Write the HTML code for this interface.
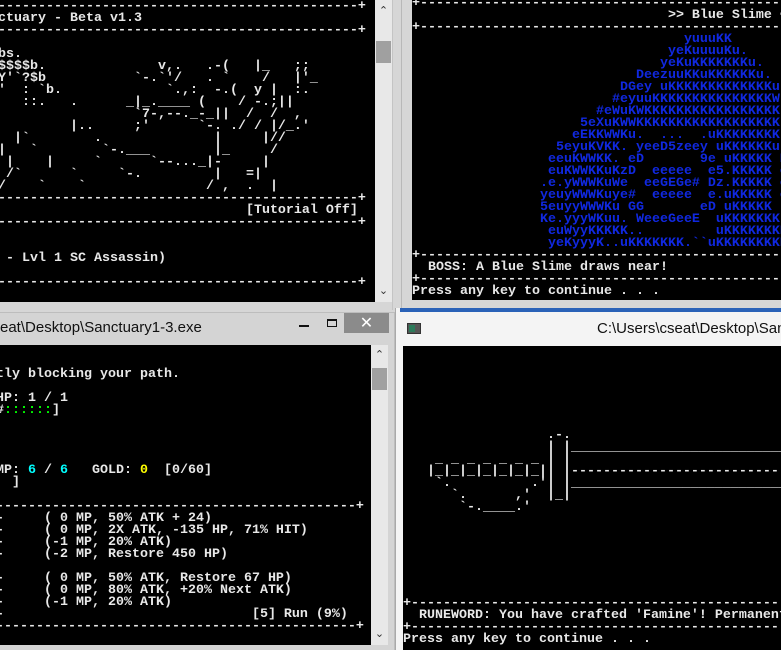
<!DOCTYPE html>
<html><head><meta charset="utf-8"><style>
*{margin:0;padding:0;box-sizing:border-box}
body{width:781px;height:650px;overflow:hidden;background:#d6d6d6;position:relative;font-family:"Liberation Sans",sans-serif}
.abs{position:absolute}
.con{position:absolute;background:#000;overflow:hidden}
pre{position:absolute;font-family:"Liberation Mono",monospace;font-weight:bold;font-size:13.33px;line-height:12px;color:#c0c0c0;white-space:pre;margin:0}
.w{color:#e8e8e8}
.b{color:#1028e0}
.g{color:#00ff00}
.c{color:#00ffff}
.y{color:#ffff00}
.sb{position:absolute;background:#e8e8e8}
.arr{position:absolute;width:17px;text-align:center;font-size:11px;color:#333;font-family:"DejaVu Sans",sans-serif}
.thumb{position:absolute;background:#a0a0a0;width:15px;left:1px}
</style></head><body>

<!-- top-left console -->
<div class="con" style="left:0;top:0;width:375px;height:302px">
<pre class="w" style="left:-2px;top:1px">---------------------------------------------+
ctuary - Beta v1.3
---------------------------------------------+

bs.
$$$$b.              v,.   .-(   |_   ;;
Y'`?$b           `-.`'/   . `    /   |'_
'  : `b.             `.,:  -.(  y |  :.
   ::.   .      _|_.____ (    / -.;||
                 `7-,--._-_||  /  /  ,
         |..     ;'      `-. ./ / |/_.'
  |`        .              |     |//
|   `        `-.___        |_     /
 |    |     `      `--..._|-     |
 /`      `     `-.         |   =|
/    `    `               / ,  .  |
---------------------------------------------+
                               [Tutorial Off]
---------------------------------------------+


 - Lvl 1 SC Assassin)

---------------------------------------------+</pre>
</div>
<div class="sb" style="left:375px;top:0;width:17px;height:302px"></div>
<div class="arr" style="left:375px;top:4px">&#8963;</div>
<div class="thumb" style="left:376px;top:41px;height:22px"></div>
<div class="arr" style="left:375px;top:284px">&#8964;</div>
<div class="abs" style="left:392px;top:0;width:1px;height:310px;background:#c4c4c4"></div>

<!-- top-right console -->
<div class="abs" style="left:401px;top:0;width:1px;height:308px;background:#b8b8b8"></div>
<div class="con" style="left:412px;top:0;width:369px;height:300px">
<pre class="w" style="left:0;top:-2px">+-----------------------------------------------
                                >> Blue Slime <<
+-----------------------------------------------</pre>
<pre class="b" style="left:0;top:34px">                                  yuuuKK
                                yeKuuuuKu.
                               yeKuKKKKKKKu.
                            DeezuuKKuKKKKKKu.
                          DGey uKKKKKKKKKKKKKu
                         #eyuuKKKKKKKKKKKKKKKW
                       #eWuKWKKKKKKKKKKKKKKKKK
                     5eXuKWWKKKKKKKKKKKKKKKKKK
                    eEKKWWKu.  ...  .uKKKKKKKK
                  5eyuKVKK. yeeD5zeey uKKKKKKu
                 eeuKWWKK. eD       9e uKKKKK K
                 euKWWKKuKzD  eeeee  e5.KKKKK e
                .e.yWWWKuWe  eeGEGe# Dz.KKKKK e
                yeuyWWWKuye#  eeeee  e.uKKKKK e
                5euyyWWWKu GG       eD uKKKKK
                Ke.yyyWKuu. WeeeGeeE  uKKKKKKK
                 euWyyKKKKK..         uKKKKKKKKK
                 yeKyyyK..uKKKKKKK.``uKKKKKKKKKK</pre>
<pre class="w" style="left:0;top:250px">+-----------------------------------------------
  BOSS: A Blue Slime draws near!
+-----------------------------------------------
Press any key to continue . . .</pre>
</div>

<!-- bottom-left window -->
<div class="abs" style="left:0;top:312px;width:395px;height:338px;background:#d4d4d4;border-top:1px solid #bdbdbd;border-right:1px solid #bdbdbd"></div>
<div class="abs" style="left:0;top:319px;font-size:15px;color:#111;white-space:nowrap">eat\Desktop\Sanctuary1-3.exe</div>
<div class="abs" style="left:299px;top:325px;width:10px;height:2px;background:#111"></div>
<div class="abs" style="left:327px;top:319px;width:10px;height:8px;border:1px solid #111;border-top-width:2px"></div>
<div class="abs" style="left:344px;top:313px;width:45px;height:20px;background:#8b8b8b;color:#fff;text-align:center;font-size:16px;line-height:20px;font-family:'DejaVu Sans',sans-serif">&#10005;</div>
<div class="con" style="left:0;top:345px;width:371px;height:300px">
<pre class="w" style="left:-4px;top:0">

 
tly blocking your path.

HP: 1 / 1
#<span class="g">::::::</span>]




MP: <span class="c">6</span> / <span class="c">6</span>   GOLD: <span class="y">0</span>  [0/60]
  ]

---------------------------------------------+
-     ( 0 MP, 50% ATK + 24)
-     ( 0 MP, 2X ATK, -135 HP, 71% HIT)
-     (-1 MP, 20% ATK)
-     (-2 MP, Restore 450 HP)

-     ( 0 MP, 50% ATK, Restore 67 HP)
-     ( 0 MP, 80% ATK, +20% Next ATK)
-     (-1 MP, 20% ATK)
-                               [5] Run (9%)
---------------------------------------------+</pre>
</div>
<div class="sb" style="left:371px;top:345px;width:17px;height:300px"></div>
<div class="arr" style="left:371px;top:348px">&#8963;</div>
<div class="thumb" style="left:372px;top:368px;height:22px"></div>
<div class="arr" style="left:371px;top:627px">&#8964;</div>

<!-- bottom-right window -->
<div class="abs" style="left:395px;top:308px;width:386px;height:342px;background:#f4f4f4;border-left:1px solid #a9a9a9"></div>
<div class="abs" style="left:400px;top:308px;width:381px;height:4px;background:#2a62b8"></div>
<div class="abs" style="left:407px;top:323px;width:14px;height:11px;background:#555;border:1px solid #333"></div>
<div class="abs" style="left:409px;top:325px;width:6px;height:7px;background:#2c7a5a"></div>
<div class="abs" style="left:597px;top:320px;font-size:15px;color:#111;white-space:nowrap">C:\Users\cseat\Desktop\Sanctuary1-3.exe</div>
<div class="con" style="left:403px;top:346px;width:378px;height:304px">
<pre class="w" style="left:0;top:0">







                  .-.
                  | |_______________________________
    _ _ _ _ _ _ _ | |
   |_|_|_|_|_|_|_|| |-------------------------------
    `.          .'| |_______________________________
      `.      ,'  |_|
       `-.____.'







+-----------------------------------------------
  RUNEWORD: You have crafted 'Famine'! Permanent
+-----------------------------------------------
Press any key to continue . . .</pre>
</div>
</body></html>
